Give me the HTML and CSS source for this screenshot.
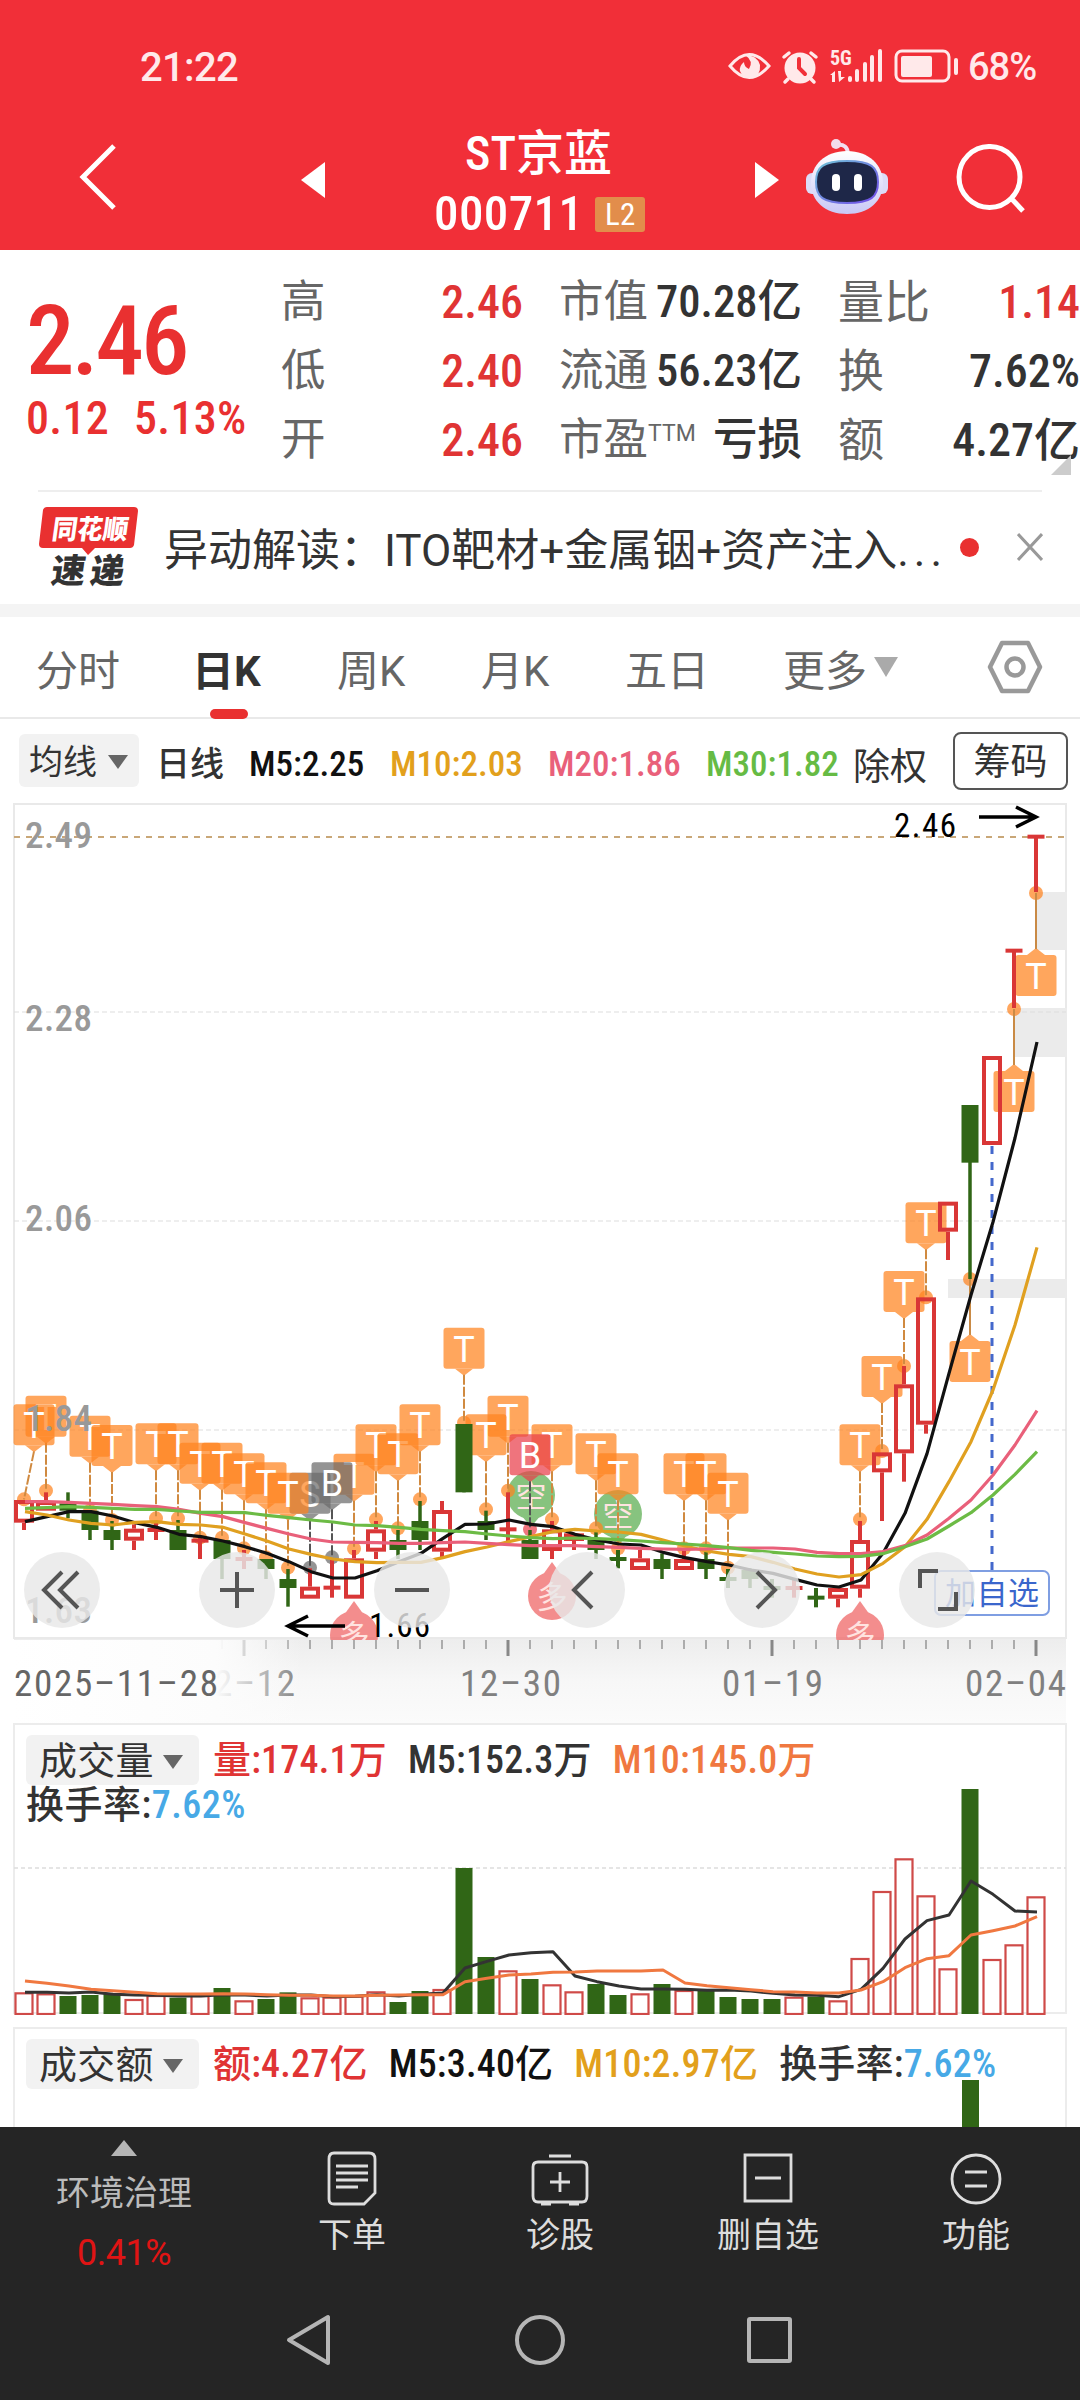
FILE: index.html
```
<!DOCTYPE html>
<html lang="zh-CN">
<head>
    <meta charset="UTF-8">
    <meta name="viewport" content="width=device-width, initial-scale=1.0">
    <title>ST京蓝 000711</title>
    <link rel="stylesheet" href="styles.css">
</head>
<body>
    <header class="header">
        <div class="status">
            <span class="clock">21:22</span>
            <svg class="status-icons" width="240" height="40" viewBox="0 0 240 40">
                <g fill="none" stroke="#ffe9ea" stroke-width="3">
                    <path d="M2 19Q21-4 41 19Q21 42 2 19Z"/>
                    <rect x="168" y="4" width="53" height="30" rx="6"/>
                    <path d="M56 10l5-4M83 6l5 4M60 32l-3 3M83 32l3 3" stroke-width="3.500" stroke-linecap="round"/>
                </g>
                <g fill="#ffe9ea">
                    <path d="M17 8q9 6 4 14q-5-2-5-7q-5 4-4 9q3 8 11 7q10-2 9-13q-3-10-15-10Z"/>
                    <circle cx="72" cy="21" r="15.500"/>
                    <rect x="173" y="9" width="31" height="21" rx="2"/>
                    <rect x="226" y="11" width="4" height="17" rx="2"/>
                    <rect x="120" y="29" width="4" height="6" rx="2"/>
                    <rect x="127" y="22" width="4" height="13" rx="2"/>
                    <rect x="135" y="15" width="4" height="20" rx="2"/>
                    <rect x="142" y="8" width="4" height="27" rx="2"/>
                    <rect x="150" y="2" width="4" height="33" rx="2"/>
                    <path d="M102 28l5-4v11h-3v-7zM110 24h3v6h4l-6 5z"/>
                    <text class="net" x="102" y="18">5G</text>
                </g>
                <path d="M71 12v9l6 6" fill="none" stroke="#f12f38" stroke-width="4" stroke-linecap="round"/>
            </svg>
            <span class="battery">68%</span>
        </div>
        <div class="nav">
            <svg class="back" width="40" height="66" viewBox="0 0 40 66"><path d="M35 2L4 33L35 64" fill="none" stroke="#fff" stroke-width="5"/></svg>
            <svg class="prev" width="24" height="36" viewBox="0 0 24 36"><path d="M24 0v36L0 18z" fill="#fff"/></svg>
            <div class="title">
                <div class="name">ST京蓝</div>
                <div class="code">000711<span class="level">L2</span></div>
            </div>
            <svg class="next" width="24" height="36" viewBox="0 0 24 36"><path d="M0 0v36l24-18z" fill="#fff"/></svg>
            <svg class="robot" width="82" height="76" viewBox="0 0 82 76">
                <defs>
                    <linearGradient id="shell" x1="0" y1="0" x2="0" y2="1"><stop offset="0" stop-color="#fff"/><stop offset="1" stop-color="#c9c8f6"/></linearGradient>
                    <linearGradient id="rim" x1="0" y1="0" x2="1" y2="1"><stop offset="0" stop-color="#6fc4d8"/><stop offset="1" stop-color="#7048e8"/></linearGradient>
                </defs>
                <path d="M30 6q12-2 12 10" fill="none" stroke="#f2dff0" stroke-width="4"/>
                <circle cx="30" cy="5" r="5" fill="#f3dcec"/>
                <rect x="0" y="34" width="14" height="21" rx="6" fill="#dcdcf8"/>
                <rect x="68" y="34" width="14" height="21" rx="6" fill="#dcdcf8"/>
                <path d="M41 12c22 0 36 14 36 32s-14 31-36 31S5 62 5 44s14-32 36-32z" fill="url(#shell)"/>
                <path d="M41 22c24 0 31 6 31 21s-7 21-31 21s-31-6-31-21s7-21 31-21z" fill="#1e2748" stroke="url(#rim)" stroke-width="2"/>
                <rect x="26" y="35" width="8" height="17" rx="4" fill="#fff"/>
                <rect x="48" y="35" width="8" height="17" rx="4" fill="#fff"/>
            </svg>
            <svg class="search" width="70" height="70" viewBox="0 0 70 70"><path d="M64 33a30.500 30.500 0 1 0-61 0a30.500 30.500 0 1 0 61 0M54 53l13 14" fill="none" stroke="#fff" stroke-width="5"/></svg>
        </div>
    </header>

    <section class="quote">
        <div class="price">
            <div class="last">2.46</div>
            <div class="change"><span>0.12</span><span>5.13%</span></div>
        </div>
        <dl class="stats s1">
            <dt>高</dt><dd class="red">2.46</dd>
            <dt>低</dt><dd class="red">2.40</dd>
            <dt>开</dt><dd class="red">2.46</dd>
        </dl>
        <dl class="stats s2">
            <dt>市值</dt><dd>70.28亿</dd>
            <dt>流通</dt><dd>56.23亿</dd>
            <dt>市盈<sup>TTM</sup></dt><dd>亏损</dd>
        </dl>
        <dl class="stats s3">
            <dt>量比</dt><dd class="red">1.14</dd>
            <dt>换</dt><dd>7.62%</dd>
            <dt>额</dt><dd>4.27亿</dd>
        </dl>
        <i class="corner"></i>
    </section>

    <section class="news">
        <svg class="logo" width="100" height="82" viewBox="0 0 100 82">
            <path d="M8 1h87q4 0 4 4l-4 34q-1 3-4 3H56l-7 7l-6-7H4q-4 0-4-4L4 4q1-3 4-3z" fill="#e93030"/>
            <text class="logo-top" transform="translate(12 33) skewX(-8)" textLength="76" lengthAdjust="spacingAndGlyphs">同花顺</text>
            <text class="logo-bottom" transform="translate(11 77) skewX(-8)" textLength="73" lengthAdjust="spacing">速递</text>
        </svg>
        <div class="news-text">异动解读：ITO靶材+金属铟+资产注入<span class="ellipsis">...</span></div>
        <i class="dot"></i>
        <svg class="close" width="26" height="28" viewBox="0 0 26 28"><path d="M1 1l24 26M25 1L1 27" stroke="#999" stroke-width="3"/></svg>
    </section>

    <nav class="tabs">
        <span>分时</span>
        <span class="active">日K</span>
        <span>周K</span>
        <span>月K</span>
        <span>五日</span>
        <span class="more">更多<i class="tri"></i></span>
        <svg class="hex" width="56" height="54" viewBox="0 0 56 54"><path d="M15 3h26l12 24l-12 24H15L3 27z" fill="none" stroke="#999" stroke-width="4.500" stroke-linejoin="round"/><circle cx="28" cy="27" r="8.500" fill="none" stroke="#999" stroke-width="4.500"/></svg>
    </nav>

    <div class="ma">
        <span class="pill">均线<i class="tri"></i></span>
        <span class="day">日线</span>
        <span class="m black">M5:2.25</span>
        <span class="m gold">M10:2.03</span>
        <span class="m pink">M20:1.86</span>
        <span class="m green">M30:1.82</span>
        <span class="ex">除权</span>
        <span class="chips">筹码</span>
    </div>

    <svg id="kline" class="kline" width="1080" height="923" viewBox="0 0 1080 923"></svg>

    <section class="panel vol">
        <svg id="volume" class="plot" width="1054" height="292" viewBox="14 1723 1054 292"></svg>
        <div class="legend">
            <span class="pill">成交量<i class="tri"></i></span>
            <span class="red">量:174.1万</span>
            <span>M5:152.3万</span>
            <span class="orange">M10:145.0万</span>
        </div>
        <div class="turnover">换手率:<span class="blue">7.62%</span></div>
    </section>
    <section class="panel amount">
        <i class="bar"></i>
        <div class="legend">
            <span class="pill">成交额<i class="tri"></i></span>
            <span class="red">额:4.27亿</span>
            <span class="black">M5:3.40亿</span>
            <span class="gold">M10:2.97亿</span>
            <span>换手率:<span class="blue">7.62%</span></span>
        </div>
    </section>

    <footer class="footer">
        <div class="actions">
            <div class="sector">
                <i class="up"></i>
                <span>环境治理</span>
                <b>0.41%</b>
            </div>
            <div class="action">
                <svg width="56" height="56" viewBox="0 0 56 56"><path d="M10 2h35q6 0 6 6v34L40 53H10q-5 0-5-5V8q0-6 5-6zM12 15h32M12 22h32M12 29h32M12 36h22"/></svg>
                <span>下单</span>
            </div>
            <div class="action">
                <svg width="58" height="56" viewBox="0 0 58 56"><path d="M18 5h22M7 11h44q5 0 5 5v29q0 6-5 6H7q-5 0-5-6V16q0-5 5-5zM29 21v20M19 31h20"/><path d="M10 53h10M38 53h10"/></svg>
                <span>诊股</span>
            </div>
            <div class="action">
                <svg width="56" height="56" viewBox="0 0 56 56"><path d="M5 4h46v46H5zM15 27h26"/></svg>
                <span>删自选</span>
            </div>
            <div class="action">
                <svg width="56" height="56" viewBox="0 0 56 56"><circle cx="28" cy="28" r="24"/><path d="M17 21h22M17 35h22"/></svg>
                <span>功能</span>
            </div>
        </div>
        <div class="system">
            <svg width="50" height="52" viewBox="0 0 50 52"><path d="M43 3v46L4 26z"/></svg>
            <svg width="50" height="52" viewBox="0 0 50 52"><circle cx="25" cy="26" r="23"/></svg>
            <svg width="50" height="52" viewBox="0 0 50 52"><rect x="4" y="5" width="41" height="42" rx="1"/></svg>
        </div>
    </footer>
    <script src="chart.js"></script>
</body>
</html>
```
FILE: styles.css
```
* {
    box-sizing: border-box;
}
body {
    margin: 0;
    width: 1080px;
    height: 2400px;
    overflow: hidden;
    background: #fff;
    color: #333;
    font-family: Roboto, "Noto Sans CJK SC", sans-serif;
    font-stretch: 87%;
}
i, b {
    font-style: normal;
    font-weight: normal;
}
svg {
    display: block;
    flex: none;
}
.red { color: #e03434; }
.black { color: #111; }
.gold { color: #e2a01c; }
.pink { color: #e9607a; }
.green { color: #66bb44; }
.orange { color: #f07840; }
.blue { color: #47a9e6; }

/* header */
.header {
    height: 250px;
    background: #f12f38;
    color: #fff;
}
.status {
    display: flex;
    align-items: center;
    height: 110px;
    padding: 24px 0 0 140px;
    color: #ffe9ea;
}
.clock {
    width: 588px;
    font-size: 40px;
    font-stretch: 100%;
    font-weight: 500;
    letter-spacing: -0.7px;
}
.battery {
    font-size: 38px;
    font-stretch: 100%;
    font-weight: 500;
    letter-spacing: -1px;
}
.net {
    font-size: 20px;
    font-weight: 700;
    font-stretch: 75%;
}
.nav {
    display: flex;
    align-items: center;
    height: 140px;
    padding: 0 0 6px 79px;
}
.prev { margin: 5px 109px 0 182px; }
.title {
    width: 212px;
    height: 122px;
    padding-top: 9px;
    text-align: center;
}
.name {
    margin-right: 3px;
    font-size: 48px;
    line-height: 58px;
    font-weight: 500;
    white-space: nowrap;
}
.code {
    display: flex;
    align-items: center;
    font-size: 49px;
    line-height: 62px;
    font-weight: 500;
    letter-spacing: 0.4px;
}
.level {
    width: 50px;
    height: 35px;
    margin-left: 12px;
    background: #e28d4b;
    border-radius: 3px;
    font-size: 31px;
    line-height: 36px;
    font-weight: 400;
}
.next { margin: 5px 27px 0 109px; }
.search { margin: 3px 0 0 68px; }

/* quote */
.quote {
    position: relative;
    display: flex;
    height: 240px;
    padding-left: 27px;
}
.price {
    width: 254px;
    color: #e93030;
    font-weight: 500;
}
.last {
    margin: 42px 0 0 -1px;
    font-size: 97px;
    line-height: 98px;
    letter-spacing: -3px;
}
.change {
    display: flex;
    gap: 25px;
    margin: 1px 0 0 -1px;
    font-size: 46px;
    line-height: 54px;
    font-weight: 500;
    letter-spacing: 0.3px;
}
.stats {
    display: grid;
    grid-template-columns: 88px 1fr;
    grid-auto-rows: 69px;
    align-items: center;
    margin: 18px 0 0;
    font-size: 46px;
    line-height: 69px;
    font-weight: 500;
    white-space: nowrap;
}
.stats dt {
    color: #666;
    font-size: 44.5px;
    font-weight: 400;
}
.stats dd {
    margin: 0;
    text-align: right;
}
.stats sup {
    font-size: 23px;
    font-stretch: 100%;
    line-height: 0;
    vertical-align: 14px;
}
.s1 { width: 242px; }
.s2 { width: 243px; margin-left: 36px; }
.s2 dd { font-size: 44.5px; }
.s3 { width: 242px; margin-left: 36px; }
.s3 dt { font-size: 46px; }
.corner {
    position: absolute;
    right: 9px;
    bottom: 15px;
    border: 10px solid transparent;
    border-right-color: #ccc;
    border-bottom-color: #ccc;
}

/* news line */
.news {
    display: flex;
    align-items: center;
    height: 114px;
    padding-left: 39px;
    background: linear-gradient(#eee, #eee) 38px 0 / 1004px 2px no-repeat;
}
.logo-top {
    fill: #fff;
    font-size: 27px;
    font-weight: 900;
}
.logo-bottom {
    fill: #333;
    font-size: 34px;
    font-weight: 900;
}
.news-text {
    width: 780px;
    margin-left: 25px;
    font-size: 44px;
    white-space: nowrap;
    font-stretch: 100%;
}
.ellipsis { letter-spacing: 5px; }
.dot {
    width: 19px;
    height: 19px;
    margin: 0 38px 0 16px;
    border-radius: 50%;
    background: #e93030;
}

/* tabs */
.tabs {
    display: flex;
    align-items: center;
    height: 115px;
    padding-left: 36px;
    border-top: 13px solid #f4f4f4;
    border-bottom: 2px solid #e9e9e9;
    color: #666;
    font-size: 42px;
    white-space: nowrap;
    font-stretch: 100%;
}
.tabs span {
    width: 144px;
}
.tabs span:first-child { width: 156px; }
.tabs .active {
    position: relative;
    width: 145px;
    color: #333;
    font-weight: 700;
}
.tabs .active::after {
    content: "";
    position: absolute;
    left: 18px;
    bottom: -21px;
    width: 38px;
    height: 10px;
    border-radius: 5px;
    background: #e93030;
}
.tabs span:nth-child(5) { width: 158px; }
.tabs .more {
    width: 204px;
}
.tri {
    display: inline-block;
    border: 10px solid transparent;
    border-top: 14px solid #666;
    border-bottom: 0;
    vertical-align: 5px;
    margin-left: 11px;
}
.tabs .tri {
    border-width: 20px 12px 0;
    border-top-color: #aaa;
    vertical-align: 9px;
    margin-left: 7px;
}

/* moving averages */
.ma {
    display: flex;
    align-items: center;
    height: 81px;
    padding: 2px 0 0 19px;
    font-size: 34px;
    white-space: nowrap;
}
.pill {
    height: 53px;
    padding-left: 10px;
    border-radius: 6px;
    background: #f2f2f2;
    line-height: 57px;
    color: #333;
}
.ma .pill {
    width: 120px;
}
.day {
    width: 93px;
    margin-left: 17px;
    padding-top: 2px;
    font-weight: 500;
}
.m {
    width: 141px;
    font-size: 35px;
    font-weight: 500;
    padding-top: 7px;
}
.m.pink, .m.gold { width: 158px; }
.m.green { width: 147px; }
.ex {
    width: 100px;
    padding-top: 6px;
    font-size: 37px;
}
.chips {
    width: 115px;
    height: 58px;
    border: 2px solid #555;
    border-radius: 8px;
    font-size: 37px;
    line-height: 57px;
    text-align: center;
}

/* chart svg */
.kline .axis {
    fill: #999;
    font-size: 37px;
    font-weight: 500;
}
.kline .date {
    fill: #808080;
    font-size: 37px;
}
.kline .date.first { fill: #666; }
.kline .peak {
    font-size: 33px;
}
.kline .mark {
    fill: #fff;
    font-size: 36px;
    font-stretch: 100%;
    text-anchor: middle;
}
.kline .seal {
    fill: #ffe3e0;
    font-size: 31px;
    text-anchor: middle;
}
.kline .add {
    fill: #3a66cc;
    font-size: 31px;
}

/* sub charts */
.panel {
    position: relative;
    width: 1054px;
    margin-left: 13px;
    border: 2px solid #ececec;
    font-size: 38px;
}
.vol { height: 291px; }
.plot {
    position: absolute;
    left: -1px;
    top: -2px;
}
.legend {
    position: relative;
    display: flex;
    align-items: center;
    gap: 21px;
    height: 50px;
    margin: 10px 0 0 11px;
    font-weight: 500;
    line-height: 48px;
    letter-spacing: 0.2px;
    white-space: nowrap;
}
.legend .pill {
    width: 173px;
    height: 50px;
    margin-right: -7px;
    padding-left: 13px;
    font-size: 38px;
    line-height: 53px;
    font-weight: 400;
}
.legend .tri { margin-left: 9px; }
.turnover {
    position: relative;
    margin: 1px 0 0 11px;
    font-size: 38px;
    line-height: 38px;
    font-weight: 500;
    letter-spacing: 0.5px;
}
.amount {
    height: 100px;
    margin-top: 13px;
    border-bottom: 0;
}
.bar {
    position: absolute;
    left: 947px;
    top: 51px;
    width: 17px;
    height: 47px;
    background: #306616;
}

/* footer */
.footer {
    height: 273px;
    background: #252525;
    color: #ddd;
    font-size: 34px;
}
.actions {
    display: flex;
    height: 160px;
}
.sector {
    display: flex;
    flex-direction: column;
    align-items: center;
    width: 248px;
    padding-top: 13px;
    color: #bbb;
    line-height: 48px;
}
.sector span { margin-top: 13px; }
.sector b {
    margin-top: 12px;
    color: #e01414;
    font-size: 36px;
    font-stretch: 100%;
    letter-spacing: -0.5px;
}
.up {
    border: 13px solid transparent;
    border-top: 0;
    border-bottom: 16px solid #b5b5b5;
}
.action {
    display: flex;
    flex-direction: column;
    align-items: center;
    width: 208px;
    padding-top: 24px;
}
.action span { line-height: 56px; }
.action svg {
    fill: none;
    stroke: #ddd;
    stroke-width: 2.8;
}
.system {
    display: flex;
    padding: 27px 0 0 285px;
    gap: 180px;
}
.system svg {
    fill: none;
    stroke: #b5b5b5;
    stroke-width: 4;
    stroke-linejoin: round;
}
```
FILE: chart.js
```
const RED = '#d93636', GREEN = '#306616';
const X = i => 24 + 22 * i;
const Y = v => 440 + v / 3;

// [type, wick top, body top, body bottom, wick bottom]; r/g = up/down body, c/x = up/down cross
const candles = [
    ['r', 780, 780, 848, 870], ['r', 757, 783, 812, 812], ['g', 757, 790, 812, 835], ['g', 812, 812, 870, 900],
    ['g', 843, 870, 900, 930], ['r', 853, 866, 902, 930], ['c', 845, 870, 870, 900], ['g', 840, 870, 930, 930],
    ['c', 893, 902, 902, 957], ['g', 900, 900, 957, 1017], ['c', 930, 957, 957, 987], ['g', 957, 957, 987, 1017],
    ['g', 987, 1017, 1044, 1100], ['r', 985, 1040, 1076, 1076], ['c', 960, 1043, 1043, 1073], ['r', 930, 955, 1076, 1076],
    ['r', 843, 868, 935, 957], ['g', 870, 900, 930, 957], ['g', 783, 843, 900, 930], ['r', 783, 810, 935, 957],
    ['g', 552, 552, 757, 757], ['g', 812, 843, 870, 900], ['c', 757, 868, 868, 908], ['g', 870, 900, 957, 957],
    ['r', 843, 868, 933, 957], ['r', 880, 880, 903, 930], ['g', 870, 900, 930, 957], ['x', 930, 957, 957, 985],
    ['r', 930, 955, 990, 990], ['g', 940, 957, 987, 1017], ['r', 930, 957, 990, 990], ['g', 935, 957, 987, 1017],
    ['x', 987, 1017, 1017, 1044], ['g', 985, 990, 1017, 1044], ['x', 1017, 1044, 1044, 1073], ['c', 1017, 1044, 1044, 1073],
    ['x', 1044, 1073, 1073, 1102], ['r', 1044, 1044, 1076, 1102], ['r', 843, 900, 1046, 1073], ['r', 637, 637, 697, 843],
    ['r', 378, 433, 640, 725], ['r', 172, 172, 554, 581], ['r', -115, -115, -25, 60], ['g', -405, -405, -232, 117],
    ['r', -552, -552, -285, -285], ['c', -870, -868, -868, -696], ['c', -1212, -1210, -1210, -1044]
];

// [index, dot, letter, colour, pointing up]
const marks = [
    [1, 752], [3, 812], [4, 840], [6, 835], [7, 835], [8, 893], [9, 893], [10, 925], [11, 952],
    [13, 983, 'S', '#6b6b6b'], [12, 983], [15, 926], [14, 952, 'B', '#6b6b6b'], [16, 838], [17, 865], [18, 778], [20, 548],
    [22, 752], [21, 808], [24, 838], [23, 868, 'B', '#e9404c'], [26, 865], [27, 925], [30, 925], [31, 925], [32, 983],
    [38, 838], [39, 633], [40, 378], [41, 172], [43, 117, 'T', '', 1], [45, -693, 'T', '', 1], [46, -1041, 'T', '', 1],
    [0, 778]
];

const averages = [
    ['#111', [845, 830, 815, 815, 828, 848, 862, 883, 890, 903, 920, 940, 965, 995, 1014, 1014, 992, 965, 940, 895, 853, 852, 840, 853, 860, 883, 900, 912, 915, 937, 953, 965, 975, 990, 1000, 1018, 1035, 1041, 1020, 940, 820, 641, 400, 165, -54, -306, -594]],
    ['#e0a020', [815, 825, 840, 850, 855, 847, 845, 853, 855, 862, 882, 903, 927, 943, 957, 965, 968, 967, 967, 953, 935, 921, 905, 890, 875, 868, 873, 876, 883, 900, 918, 933, 943, 950, 967, 987, 1002, 1011, 1004, 970, 920, 838, 725, 605, 450, 255, 22]],
    ['#e9607a', [785, 785, 787, 790, 793, 797, 800, 808, 820, 830, 848, 865, 882, 897, 906, 907, 908, 910, 910, 908, 906, 910, 914, 917, 917, 917, 920, 922, 925, 927, 928, 927, 924, 924, 924, 927, 937, 941, 941, 935, 917, 885, 835, 780, 705, 615, 512]],
    ['#6cbb45', [805, 803, 800, 802, 805, 808, 808, 813, 817, 817, 818, 826, 833, 840, 846, 855, 857, 862, 868, 872, 875, 882, 888, 893, 896, 894, 896, 899, 903, 908, 912, 917, 923, 931, 937, 942, 948, 950, 949, 941, 920, 897, 858, 818, 765, 703, 635]]
];

function line(x1, y1, x2, y2, color, width, extra = '') {
    return `<line x1="${x1}" y1="${y1}" x2="${x2}" y2="${y2}" stroke="${color}" stroke-width="${width}" ${extra}/>`;
}

function candle([type, high, top, bottom, low], i) {
    const x = X(i), color = type === 'r' || type === 'c' ? RED : GREEN;
    if (type === 'g') {
        return line(x, Y(high), x, Y(low), color, 3.5) + `<rect x="${x - 8.5}" y="${Y(top)}" width="17" height="${(bottom - top) / 3}" fill="${color}"/>`;
    }
    if (type === 'r') {
        return line(x, Y(high), x, Y(top), color, 4) + line(x, Y(bottom), x, Y(low), color, 4) +
            `<rect x="${x - 8}" y="${Y(top) + 2}" width="16" height="${(bottom - top) / 3 - 4}" fill="none" stroke="${color}" stroke-width="4"/>`;
    }
    return line(x, Y(high), x, Y(low), color, 4) + line(x - 8.5, Y(top), x + 8.5, Y(top), color, 4);
}

function mark([i, dot, letter = 'T', color = '', up]) {
    const x = X(i), y = Y(dot), c = color || '#ff8420';
    const cx = i === 0 ? 34 : x;
    const top = up ? y + 62 : y - 95;
    const tip = up ? `M${cx - 9} ${top}l9-7l9 7z` : `M${cx - 9} ${top + 41}l9 7l9-7z`;
    const stem = up ? line(x, y, x, top - 6, '#c98a45', 2) : line(cx, top + 47, x, y, color ? '#555' : '#d08a40', 2, 'stroke-dasharray="10 2"');
    return `<g><g opacity=".72" fill="${c}"><rect x="${cx - 20.5}" y="${top}" width="41" height="41" rx="3"/><path d="${tip}"/><circle cx="${x}" cy="${y}" r="7"/></g>${stem}
        <text class="mark" x="${cx}" y="${top + 34}">${letter}</text></g>`;
}

function seal(x, y, char, color, up) {
    const tip = up ? `M${x - 10} ${y - 20}L${x} ${y - 34}L${x + 10} ${y - 20}z` : `M${x - 10} ${y + 20}L${x} ${y + 32}L${x + 10} ${y + 20}z`;
    return `<g opacity=".75"><circle cx="${x}" cy="${y}" r="24" fill="${color}"/><path d="${tip}" fill="${color}"/></g><text class="seal" x="${x}" y="${y + 12}">${char}</text>`;
}

function poly(values, y, color, width) {
    return `<polyline points="${values.map((v, i) => (X(i) + 1) + ',' + y(v)).join(' ')}" fill="none" stroke="${color}" stroke-width="${width}" stroke-linejoin="round"/>`;
}

function button(x, path) {
    return `<circle cx="${x}" cy="790" r="38" fill="#e8e8e8" opacity=".82"/><path d="${path}" transform="translate(${x} 790)" fill="none" stroke="#555" stroke-width="4"/>`;
}

function drawKline() {
    let s = `<defs>
        <linearGradient id="band" x1="0" y1="0" x2="0" y2="1"><stop offset="0" stop-color="#ededed"/><stop offset=".5" stop-color="#f7f7f7"/><stop offset="1" stop-color="#fbfbfb"/></linearGradient>
        <linearGradient id="fade"><stop offset="0" stop-color="#fff"/><stop offset=".7" stop-color="#fcfcfc"/><stop offset="1" stop-color="#fcfcfc" stop-opacity="0"/></linearGradient>
        <clipPath id="frame"><rect x="13" y="4" width="1054" height="836"/></clipPath></defs>
        <rect x="14" y="839" width="1052" height="84" fill="url(#band)"/>
        <path d="M14 4v835M13 4h1054M1066 4v835M13 838h1054" stroke="#e9e9e9" stroke-width="2" fill="none"/>
        <g fill="#ebebeb"><rect x="1036" y="92" width="31" height="58"/><rect x="1015" y="208" width="52" height="49"/><rect x="948" y="479" width="119" height="19"/></g>`;
    [212, 421, 630].forEach(y => s += line(14, y, 1066, y, '#ddd', 1.2, 'stroke-dasharray="5 3"'));
    s += line(14, 37, 1066, 37, '#c9a778', 2, 'stroke-dasharray="6 6"');
    s += '<g clip-path="url(#frame)">';
    s += seal(531, 695, '空', '#5faf54', false) + seal(618, 714, '空', '#5faf54', false);
    s += marks.map(mark).join('');
    s += seal(354, 835, '多', '#f06868', true) + seal(552, 796, '多', '#f06868', true) + seal(860, 835, '多', '#f06868', true);
    s += line(992, 346, 992, 770, '#4468cc', 3, 'stroke-dasharray="8 8"');
    s += candles.map(candle).join('');
    s += averages.map(a => poly(a[1], Y, a[0], 3.2)).join('');
    s += '</g>';

    [['2.49', 48], ['2.28', 231], ['2.06', 431], ['1.84', 631], ['1.63', 823]].forEach(([t, y]) => {
        s += `<text class="axis" x="25" y="${y}" textLength="67">${t}</text>`;
    });
    s += '<text class="peak" x="894" y="37" textLength="62">2.46</text><path d="M979 17h57M1016 7l20 10l-20 10" fill="none" stroke="#000" stroke-width="3.500"/>';
    s += '<text class="peak" x="369" y="837" textLength="61">1.66</text><path d="M345 826h-57M308 816l-20 10l20 10" fill="none" stroke="#000" stroke-width="3.500"/>';
    s += '<rect x="935" y="771" width="114" height="44" rx="6" fill="#fff" stroke="#7f9ee2" stroke-width="2"/><text class="add" x="945" y="804" textLength="94">加自选</text>';
    s += button(62, 'M0-18l-18 18l18 18M16-18l-18 18l18 18') + button(237, 'M-17 0h34M0-18v36') + button(412, 'M-17 0h34') +
        button(587, 'M5-18l-18 18l18 18') + button(762, 'M-5-18l18 18l-18 18') + button(937, 'M-17-2v-17h18M19 2v17h-18');

    for (let i = 9; i <= 46; i++) {
        const major = i % 12 === 10;
        s += line(X(i), 840, X(i), major ? 856 : 849, '#888', major ? 3 : 1.3);
    }
    [['12–12', 194], ['12–30', 460], ['01–19', 722], ['02–04', 965]].forEach(([t, x]) => {
        s += `<text class="date" x="${x}" y="896" textLength="101">${t}</text>`;
    });
    s += '<rect x="13" y="840" width="290" height="83" fill="url(#fade)"/><text class="date first" x="14" y="896" textLength="204">2025–11–28</text>';
    document.getElementById('kline').innerHTML = s;
}

// bar tops, coloured position by position from the string below
const volumes = [880, 883, 888, 885, 880, 900, 888, 893, 888, 864, 904, 897, 877, 895, 893, 890, 877, 906, 873, 870, 504, 771, 814, 837, 856, 877, 852, 885, 883, 852, 873, 870, 891, 897, 897, 893, 890, 904, 777, 576, 478, 589, 808, 267, 780, 736, 592];
const volumeColors = 'rrgggrrgrgrggrrrrggrggrgrrggrgrgggg' + 'rgrrrrrrgrrr';
const volumeM5 = [877, 877, 879, 876, 883, 885, 886, 888, 888, 884, 885, 888, 885, 885, 890, 889, 884, 888, 883, 879, 804, 784, 765, 758, 755, 828, 845, 858, 867, 867, 868, 871, 870, 873, 880, 885, 886, 890, 868, 805, 717, 662, 645, 543, 583, 633, 636];
const volumeM10 = [843, 850, 858, 868, 872, 877, 881, 882, 882, 881, 882, 884, 886, 886, 888, 888, 886, 885, 884, 884, 845, 835, 825, 822, 817, 816, 813, 813, 813, 810, 849, 857, 863, 869, 875, 876, 879, 879, 870, 845, 803, 776, 767, 705, 692, 678, 650];

function drawVolume() {
    const y = v => 1700 + v / 3;
    let s = line(14, 1868, 1066, 1868, '#ddd', 1.5, 'stroke-dasharray="4 3"');
    volumes.forEach((v, i) => {
        const x = X(i), h = (942 - v) / 3;
        s += volumeColors[i] === 'g'
            ? `<rect x="${x - 8.5}" y="${y(v)}" width="17" height="${h}" fill="${GREEN}"/>`
            : `<rect x="${x - 8.5}" y="${y(v)}" width="17" height="${h}" fill="#fff" stroke="#cf4a48" stroke-width="2.200"/>`;
    });
    s += poly(volumeM5, y, '#333', 3) + poly(volumeM10, y, '#f07840', 3);
    document.getElementById('volume').innerHTML = s;
}

drawKline();
drawVolume();
```
